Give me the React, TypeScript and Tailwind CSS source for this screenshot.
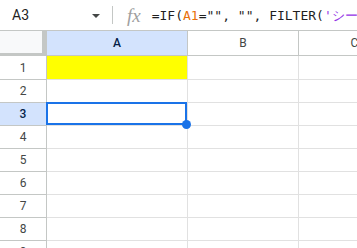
const rows = [1, 2, 3, 4, 5, 6, 7, 8, 9];

function FormulaBar() {
  return (
    <div className="flex h-[31px] items-center overflow-hidden border-b border-[#c4c7c5] bg-white">
      <div className="flex w-[112px] shrink-0 items-center justify-between pl-[12px] pr-[12px]">
        <span className="text-[14px] leading-none text-[#1f1f1f]">A3</span>
        <svg width="8" height="4" viewBox="0 0 8 4" className="mt-[1px]">
          <path d="M0 0h8L4 4z" fill="#444746" />
        </svg>
      </div>
      <div className="h-[18px] w-px shrink-0 bg-[#c4c7c5]" />
      <span className="ml-[14px] shrink-0 font-['Liberation_Serif',serif] text-[19px] italic leading-none text-[#a0a0a0]">
        fx
      </span>
      <div className="ml-[11px] shrink-0 whitespace-nowrap font-['DejaVu_Sans_Mono',monospace] text-[13px] leading-none text-[#1f1f1f]">
        =IF(<span className="text-[#e8710a]">A1</span>="", "", FILTER(
        <span className="text-[#9334e6]">'シート</span>
      </div>
    </div>
  );
}

function HeaderRow() {
  return (
    <div className="flex h-[25px] overflow-hidden text-[12px]">
      <div className="w-[47px] shrink-0 border-r-[5px] border-b-[3px] border-[#c4c7c5] bg-[#f8f9fa]" />
      <div className="flex w-[141px] shrink-0 items-center justify-center border-r border-b border-[#c4c7c5] bg-[#d3e3fd] font-medium text-[#041e49]">
        A
      </div>
      <div className="flex w-[111px] shrink-0 items-center justify-center border-r border-b border-[#c4c7c5] text-[#444746]">
        B
      </div>
      <div className="flex w-[111px] shrink-0 items-center justify-center border-b border-[#c4c7c5] text-[#444746]">
        C
      </div>
    </div>
  );
}

function GridRow({ n }: { n: number }) {
  const selected = n === 3;
  return (
    <div className={`flex ${n === 1 ? "h-[24px]" : "h-[23px]"}`}>
      <div
        className={`flex w-[47px] shrink-0 items-center justify-center border-r border-b border-[#c4c7c5] text-[12px] ${
          selected ? "bg-[#d3e3fd] font-medium text-[#041e49]" : "text-[#444746]"
        }`}
      >
        {n}
      </div>
      <div
        className={`relative w-[141px] shrink-0 border-r border-b border-[#e1e1e1] ${n === 1 ? "bg-[#ffff00]" : ""}`}
      >
        {selected && (
          <>
            <div className="absolute left-[-1px] top-[-1px] h-[23px] w-[141px] border-2 border-[#1a73e8]" />
            <div className="absolute left-[135px] top-[17px] z-10 h-[9px] w-[9px] rounded-full bg-[#1a73e8]" />
          </>
        )}
      </div>
      <div className="w-[111px] shrink-0 border-r border-b border-[#e1e1e1]" />
      <div className="w-[111px] shrink-0 border-b border-[#e1e1e1]" />
    </div>
  );
}

export default function App() {
  return (
    <div className="h-[248px] w-[357px] overflow-hidden bg-white font-['Roboto',sans-serif]">
      <FormulaBar />
      <HeaderRow />
      {rows.map((n) => (
        <GridRow key={n} n={n} />
      ))}
    </div>
  );
}
